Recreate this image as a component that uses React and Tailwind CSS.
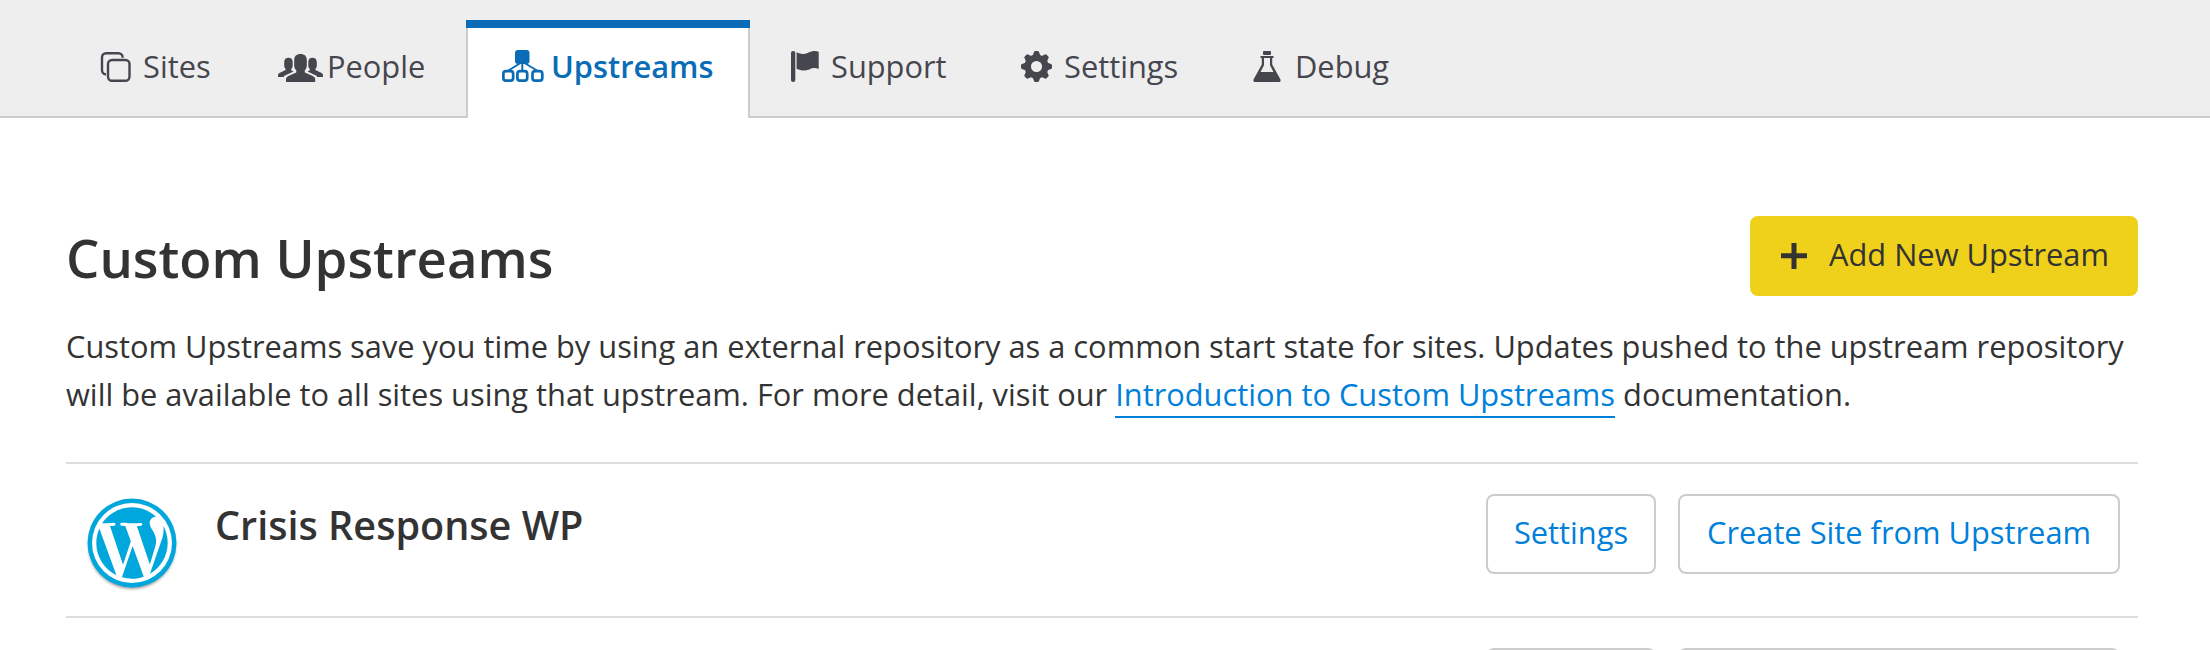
const Svg = ({ w, h, className = "", children }) => (
  <svg width={w} height={h} viewBox={`0 0 ${w} ${h}`} fill="currentColor" className={`shrink-0 ${className}`}>
    {children}
  </svg>
);

const SitesIcon = () => (
  <Svg w={32} h={32}>
    <g fill="none" stroke="currentColor" strokeWidth="2.400">
      <rect x="8" y="10" width="21.500" height="20.800" rx="4" />
      <path d="M22.600 7.800V7.200a4 4 0 0 0-4-4H6a4 4 0 0 0-4 4v13a4 4 0 0 0 4 4" />
    </g>
  </Svg>
);

const PEOPLE_SIDE =
  "M10.500 7.700c2.600 0 4.200 1.500 4.200 4.300v3.500c0 1.500-.6 2.700-1.500 3.400v1.400l2.300 1.300-8.500 4c-.8.400-1 .8-1.200 1.300H0v-1.700c0-1.300.6-1.900 1.900-2.500l5.700-2.700v-1.100c-.8-.7-1.400-1.900-1.400-3.400V12c0-2.800 1.700-4.300 4.300-4.300z";

const PeopleIcon = () => (
  <Svg w={46} h={32}>
    <path d="M22.500 4c4 0 6.300 2.200 6.300 6v5.500c0 2.300-.9 3.800-2 4.700v2.300l7.500 3.200c2 1 2.900 1.800 2.900 3.600V32H8v-2.700c0-1.800.9-2.600 2.900-3.600l7.400-3.200v-2.300c-1.200-.9-2.100-2.400-2.100-4.700V10c0-3.800 2.300-6 6.300-6z" />
    <path d={PEOPLE_SIDE} />
    <path transform="translate(45 0) scale(-1 1)" d={PEOPLE_SIDE} />
  </Svg>
);

const UpstreamsIcon = () => (
  <Svg w={42} h={32}>
    <rect x="13" y="0" width="14.500" height="14" rx="3" />
    <g fill="none" stroke="currentColor" strokeWidth="2.700">
      <rect x="1.350" y="21.200" width="9.800" height="9.400" rx="2.600" />
      <rect x="15.400" y="21.200" width="9.800" height="9.400" rx="2.600" />
      <rect x="30.500" y="21.200" width="9.800" height="9.400" rx="2.600" />
      <path strokeWidth="2" d="M18.500 13 6.500 20.500M20.300 13v8M22.500 13l12.500 7.500" />
    </g>
  </Svg>
);

const FlagIcon = () => (
  <Svg w={28} h={32}>
    <rect x="0" y="1" width="4.300" height="31" rx="2" />
    <path d="M5.600 2.300c4.500 2.200 8 2 11.500.4 3.500-1.500 7-2.200 10.600-.9V19c-3.500-1.600-6.500-1-9.500.4-4 1.600-8 1.600-12.600-.6z" />
  </Svg>
);

const GearIcon = () => (
  <Svg w={32} h={32}>
    <g transform="translate(15.500 16.500)">
      <circle r="8.800" fill="none" stroke="currentColor" strokeWidth="6.500" />
      {[0, 45, 90, 135, 180, 225, 270, 315].map((a) => (
        <path key={a} transform={`rotate(${a})`} d="M-4-10.500-2.500-14.500Q-2.200-15.500-1.200-15.500H1.200Q2.200-15.500 2.500-14.500L4-10.500z" />
      ))}
    </g>
  </Svg>
);

const FlaskIcon = () => (
  <Svg w={28} h={32}>
    <rect x="10" y="1" width="8" height="4" rx="1" />
    <path fillRule="evenodd" d="M7.500 6h13v2h-1.300v6.500l8 14.500c.9 1.800.2 3-1.500 3H2.300c-1.700 0-2.400-1.200-1.500-3l8-14.500V8H7.500zM11 8v7.200L7.500 22h13L17 15.200V8z" />
  </Svg>
);

const tabs = [
  { label: "Sites", Icon: SitesIcon, box: "w-[178px] pl-[36px]", text: "ml-[11px]" },
  { label: "People", Icon: PeopleIcon, box: "w-[224px] pl-[36px]", text: "ml-[3px]" },
  { label: "Upstreams", Icon: UpstreamsIcon, box: "w-[284px]", text: "ml-[7px]", active: true },
  { label: "Support", Icon: FlagIcon, box: "w-[234px] pl-[41px]", text: "ml-[12px]" },
  { label: "Settings", Icon: GearIcon, box: "w-[233px] pl-[37px]", text: "ml-[11px]" },
  { label: "Debug", Icon: FlaskIcon, box: "w-[240px] pl-[36px]", text: "ml-[14px]" },
];

const WordPressLogo = () => (
  <svg width="96" height="100" viewBox="0 0 96 100" className="shrink-0">
    <defs>
      <filter id="soft" x="-20%" y="-20%" width="140%" height="140%">
        <feGaussianBlur stdDeviation="1.800" />
      </filter>
    </defs>
    <circle cx="48" cy="51.500" r="43.500" fill="#000" opacity=".4" filter="url(#soft)" />
    <circle cx="48" cy="49" r="44.500" fill="#00a7dd" />
    <circle cx="48" cy="49" r="40" fill="#fff" />
    <path
      transform="translate(48 49) scale(3.310) translate(-12 -12)"
      fill="#00a7dd"
      d="M21.469 6.825c.84 1.537 1.318 3.300 1.318 5.175 0 3.979-2.156 7.456-5.363 9.325l3.295-9.527c.615-1.540.82-2.771.82-3.864 0-.405-.026-.78-.07-1.110m-7.981.105c.647-.03 1.232-.105 1.232-.105.582-.075.514-.93-.067-.899 0 0-1.755.135-2.880.135-1.064 0-2.850-.15-2.850-.15-.585-.03-.661.855-.075.885 0 0 .54.061 1.125.09l1.680 4.605-2.370 7.080L5.354 6.900c.649-.03 1.234-.1 1.234-.1.585-.075.516-.93-.065-.896 0 0-1.746.138-2.874.138-.2 0-.438-.008-.69-.015C4.911 3.150 8.235 1.215 12 1.215c2.809 0 5.365 1.072 7.286 2.833-.046-.003-.091-.009-.141-.009-1.060 0-1.812.923-1.812 1.914 0 .89.513 1.643 1.060 2.531.411.72.89 1.643.89 2.977 0 .915-.354 1.994-.821 3.479l-1.075 3.585-3.900-11.610.001.014zM12 22.784c-1.059 0-2.081-.153-3.048-.437l3.237-9.406 3.315 9.087c.024.053.05.101.078.149-1.120.393-2.325.609-3.582.609M1.211 12c0-1.564.336-3.050.935-4.390L7.290 21.709C3.694 19.960 1.212 16.271 1.211 12"
    />
  </svg>
);

const rowButton =
  "h-[80px] rounded-[8px] border-2 border-[#ccc] pb-[4px] text-center text-[#007fdb] leading-[72px] whitespace-nowrap";

const RowActions = ({ settings, create }) => (
  <div className="ml-auto mr-[18px] flex gap-[22px]">
    <button className={`${rowButton} w-[170px]`}>{settings}</button>
    <button className={`${rowButton} w-[442px]`}>{create}</button>
  </div>
);

export default function App() {
  return (
    <div className="h-[650px] w-[2210px] overflow-hidden bg-white font-['Open_Sans',sans-serif] text-[30.8px] text-[#333]">
      <nav className="flex h-[118px] bg-[#eee] pt-[20px]">
        <div className="w-[64px] border-b-2 border-[#ccc]" />
        {tabs.map(({ label, Icon, box, text, active }) =>
          active ? (
            <a key={label} className={`flex h-[98px] flex-col bg-white font-semibold text-[#0a6cb6] ${box}`}>
              <span className="h-[8px] bg-[#0a6cb6]" />
              <span className="flex h-[90px] items-start border-x-2 border-[#ccc] pl-[34px] pt-[22px]">
                <Icon />
                <span className={`-mt-[6px] leading-[44px] ${text}`}>{label}</span>
              </span>
            </a>
          ) : (
            <a key={label} className={`flex h-[98px] items-start border-b-2 border-[#ccc] pt-[30px] text-[#46464f] ${box}`}>
              <Icon />
              <span className={`-mt-[6px] leading-[44px] ${text}`}>{label}</span>
            </a>
          )
        )}
        <div className="flex-1 border-b-2 border-[#ccc]" />
      </nav>

      <main className="pl-[66px] pr-[72px] pt-[98px]">
        <header className="flex h-[106px] items-start justify-between">
          <h1 className="mt-[5px] text-[52.7px] font-semibold leading-[73px]">Custom Upstreams</h1>
          <button className="flex h-[80px] w-[388px] items-center rounded-[8px] bg-[#efd11c] pl-[31px]">
            <Svg w={26} h={26}>
              <path d="M10.500 0h5v10.300H26v5H15.500V26h-5V15.300H0v-5h10.500z" />
            </Svg>
            <span className="-mt-[4px] ml-[22px] whitespace-nowrap leading-[44px]">Add New Upstream</span>
          </button>
        </header>

        <p className="h-[140px] whitespace-nowrap leading-[48px]">
          Custom Upstreams save you time by using an external repository as a common start state for sites. Updates pushed to the upstream repository
          <br />
          will be available to all sites using that upstream. For more detail, visit our{" "}
          <a className="border-b-2 border-[#007fdb] pb-[1px] text-[#007fdb]">Introduction to Custom Upstreams</a> documentation.
        </p>

        <section className="flex h-[156px] items-start border-y-2 border-[#ddd] pt-[30px]">
          <div className="ml-[18px]">
            <WordPressLogo />
          </div>
          <h2 className="ml-[35px] mt-[3px] text-[39.6px] font-semibold leading-[56px]">Crisis Response WP</h2>
          <RowActions settings="Settings" create="Create Site from Upstream" />
        </section>
        <section className="flex h-[32px] items-start overflow-hidden pt-[30px]">
          <RowActions />
        </section>
      </main>
    </div>
  );
}
